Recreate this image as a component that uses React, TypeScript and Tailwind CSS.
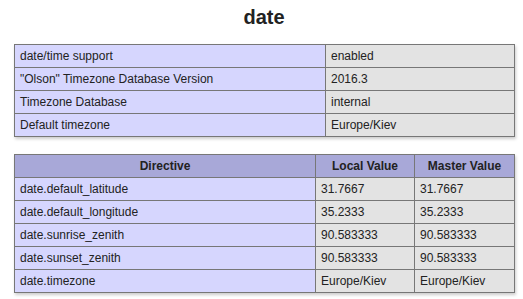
const summary = [
  ['date/time support', 'enabled'],
  ['"Olson" Timezone Database Version', '2016.3'],
  ['Timezone Database', 'internal'],
  ['Default timezone', 'Europe/Kiev'],
];

const directives = [
  ['date.default_latitude', '31.7667', '31.7667'],
  ['date.default_longitude', '35.2333', '35.2333'],
  ['date.sunrise_zenith', '90.583333', '90.583333'],
  ['date.sunset_zenith', '90.583333', '90.583333'],
  ['date.timezone', 'Europe/Kiev', 'Europe/Kiev'],
];

const cell = 'border border-[#777] px-[5px] py-[4px] text-left align-baseline';

export default function App() {
  return (
    <div className="min-h-screen bg-white text-[#222] font-['Liberation_Sans',Arial,sans-serif] text-[12px] leading-[14px]">
      <div className="ml-[14px] w-[500px] pt-[5px]">
        <h2 className="text-center text-[20px] leading-[24px] font-bold mb-[15px]">date</h2>

        {/* module info */}
        <table className="w-[500px] border-collapse table-fixed shadow-[1px_2px_3px_#ccc]">
          <colgroup>
            <col className="w-[311px]" />
            <col className="w-[189px]" />
          </colgroup>
          <tbody>
            {summary.map(([k, v]) => (
              <tr key={k}>
                <td className={`${cell} bg-[#d6d6fe]`}>{k}</td>
                <td className={`${cell} bg-[#e3e3e3]`}>{v}</td>
              </tr>
            ))}
          </tbody>
        </table>

        {/* directives */}
        <table className="mt-[17px] w-[500px] border-collapse table-fixed shadow-[1px_2px_3px_#ccc]">
          <colgroup>
            <col className="w-[301px]" />
            <col className="w-[99px]" />
            <col className="w-[100px]" />
          </colgroup>
          <thead>
            <tr className="bg-[#a8a8d8] font-bold">
              <th className={`${cell} !text-center`}>Directive</th>
              <th className={`${cell} !text-center`}>Local Value</th>
              <th className={`${cell} !text-center`}>Master Value</th>
            </tr>
          </thead>
          <tbody>
            {directives.map(([name, local, master]) => (
              <tr key={name}>
                <td className={`${cell} bg-[#d6d6fe]`}>{name}</td>
                <td className={`${cell} bg-[#e3e3e3]`}>{local}</td>
                <td className={`${cell} bg-[#e3e3e3]`}>{master}</td>
              </tr>
            ))}
          </tbody>
        </table>
      </div>
    </div>
  );
}
